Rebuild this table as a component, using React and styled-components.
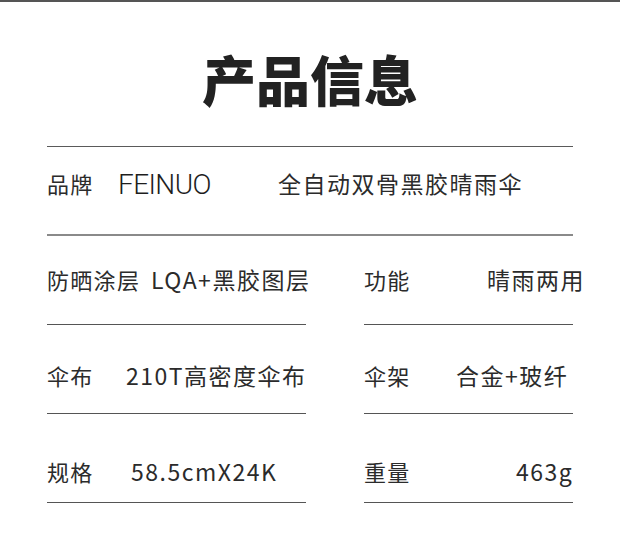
import styled, { createGlobalStyle } from "styled-components";

const GlobalStyle = createGlobalStyle`
  html, body {
    margin: 0;
    padding: 0;
    background: #ffffff;
  }
  body {
    font-family: "Noto Sans CJK SC", "Noto Sans", sans-serif;
    color: #2b2b2b;
  }
`;

const rows = [
  {
    pt: 25,
    full: true,
    cols: [71, 160],
    items: ["品牌", "FEINUO", "全自动双骨黑胶晴雨伞"],
  },
  {
    pt: 32,
    left: { label: "防晒涂层", value: "LQA+黑胶图层", col: 104 },
    right: { label: "功能", value: "晴雨两用", col: 123 },
  },
  {
    pt: 39,
    left: { label: "伞布", value: "210T高密度伞布", col: 79 },
    right: { label: "伞架", value: "合金+玻纤", col: 92 },
  },
  {
    pt: 46,
    left: { label: "规格", value: "58.5cmX24K", col: 84 },
    right: { label: "重量", value: "463g", col: 152 },
  },
];

const App = () => {
  return (
    <Page>
      <GlobalStyle />
      <Title>产品信息</Title>
      <Table>
        {rows.map((row, i) =>
          row.full ? (
            <FullRow key={i} $pt={row.pt} $cols={row.cols}>
              <Label>{row.items[0]}</Label>
              <Brand>{row.items[1]}</Brand>
              <Value>{row.items[2]}</Value>
            </FullRow>
          ) : (
            <SplitRow key={i}>
              {[row.left, row.right].map((cell, j) => (
                <Cell key={j} $pt={row.pt} $col={cell.col}>
                  <Label>{cell.label}</Label>
                  <Value>{cell.value}</Value>
                </Cell>
              ))}
            </SplitRow>
          )
        )}
      </Table>
    </Page>
  );
};

export default App;

const Page = styled.div`
  width: 620px;
  height: 540px;
  box-sizing: border-box;
  border-top: 2px solid #555555;
  background: #ffffff;
  overflow: hidden;
`;

const Title = styled.h1`
  margin: 50px 0 0;
  font-family: "Noto Sans CJK SC", sans-serif;
  font-size: 54px;
  line-height: 54px;
  font-weight: 900;
  text-align: center;
  color: #222222;
  letter-spacing: 0;
`;

const Table = styled.div`
  margin: 40px 47px 0;
  border-top: 1px solid #5a5a5a;
`;

const FullRow = styled.div`
  height: 89px;
  box-sizing: border-box;
  padding-top: ${(p) => p.$pt}px;
  border-bottom: 2px solid #8a8a8a;
  display: grid;
  grid-template-columns: ${(p) => p.$cols.map((c) => `${c}px`).join(" ")} auto;
  align-items: start;
  white-space: nowrap;
`;

const SplitRow = styled.div`
  display: grid;
  grid-template-columns: 259px 209px;
  column-gap: 58px;
`;

const Cell = styled.div`
  height: 89px;
  box-sizing: border-box;
  padding-top: ${(p) => p.$pt}px;
  border-bottom: 1px solid #555555;
  display: grid;
  grid-template-columns: ${(p) => p.$col}px auto;
  align-items: start;
  white-space: nowrap;
`;

const Label = styled.span`
  font-size: 22px;
  line-height: 22px;
  letter-spacing: 1.3px;
  color: #2b2b2b;
`;

const Value = styled.span`
  font-size: 23px;
  line-height: 22px;
  letter-spacing: 1.5px;
  color: #2b2b2b;
`;

const Brand = styled.span`
  padding-top: 2px;
  font-family: Roboto, "Liberation Sans", sans-serif;
  font-size: 28px;
  line-height: 22px;
  font-weight: 300;
  letter-spacing: -0.6px;
  color: #1e1e1e;
`;
